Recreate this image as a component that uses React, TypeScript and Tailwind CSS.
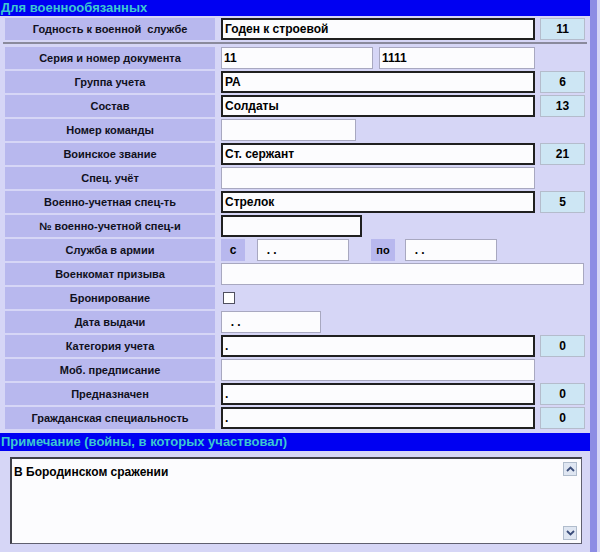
const font = { fontFamily: '"Liberation Sans", Arial, sans-serif' };

type Row = {
  label: string;
  kind: "field" | "pair" | "range" | "check";
  value?: string;
  value2?: string;
  width?: string;
  dark?: boolean;
  code?: string;
};

const rows: Row[] = [
  { label: "Серия и номер документа", kind: "pair", value: "11", value2: "1111" },
  { label: "Группа учета", kind: "field", value: "РА", dark: true, code: "6" },
  { label: "Состав", kind: "field", value: "Солдаты", dark: true, code: "13" },
  { label: "Номер команды", kind: "field", value: "", width: "w-[135px]" },
  { label: "Воинское звание", kind: "field", value: "Ст. сержант", dark: true, code: "21" },
  { label: "Спец. учёт", kind: "field", value: "" },
  { label: "Военно-учетная спец-ть", kind: "field", value: "Стрелок", dark: true, code: "5" },
  { label: "№ военно-учетной спец-и", kind: "field", value: "", width: "w-[141px]", dark: true },
  { label: "Служба в армии", kind: "range" },
  { label: "Военкомат призыва", kind: "field", value: "", width: "w-[363px]" },
  { label: "Бронирование", kind: "check" },
  { label: "Дата выдачи", kind: "field", value: "  . .", width: "w-[100px]" },
  { label: "Категория учета", kind: "field", value: ".", dark: true, code: "0" },
  { label: "Моб. предписание", kind: "field", value: "" },
  { label: "Предназначен", kind: "field", value: ".", dark: true, code: "0" },
  { label: "Гражданская специальность", kind: "field", value: ".", dark: true, code: "0" },
];

function Input({ value, width = "w-[314px]", dark }: { value: string; width?: string; dark?: boolean }) {
  return (
    <div
      className={`${width} h-[22px] bg-[#fcfcfe] flex items-center px-[2px] text-[12px] font-bold text-black whitespace-pre ${
        dark ? "border-2 border-[#202020]" : "border border-[#a8a8c0]"
      }`}
    >
      {value}
    </div>
  );
}

function Code({ value }: { value?: string }) {
  if (!value) return <div className="w-[45px] h-[22px]" />;
  return (
    <div className="w-[45px] h-[22px] bg-[#cde6f4] border border-[#b4bccc] flex items-center justify-center text-[12px] font-bold text-black">
      {value}
    </div>
  );
}

function Label({ text }: { text: string }) {
  return (
    <div className="w-[210px] h-[22px] bg-[#b8b8ee] flex items-center justify-center text-[11px] font-bold text-[#101020] whitespace-pre">
      {text}
    </div>
  );
}

function FormRow({ r }: { r: Row }) {
  return (
    <div className="flex items-start gap-[6px] h-[24px] pt-px">
      <Label text={r.label} />
      {r.kind === "field" && (
        <div className="flex gap-[5px]">
          <Input value={r.value ?? ""} width={r.width} dark={r.dark} />
          {r.code && <Code value={r.code} />}
        </div>
      )}
      {r.kind === "pair" && (
        <div className="flex gap-[6px]">
          <Input value={r.value ?? ""} width="w-[152px]" />
          <Input value={r.value2 ?? ""} width="w-[156px]" />
        </div>
      )}
      {r.kind === "range" && (
        <div className="flex items-start">
          <div className="w-[24px] h-[22px] bg-[#b8b8ee] flex items-center justify-center text-[12px] font-bold">с</div>
          <div className="ml-[12px]">
            <Input value="  . ." width="w-[92px]" />
          </div>
          <div className="ml-[22px] w-[24px] h-[22px] bg-[#b8b8ee] flex items-center justify-center text-[11px] font-bold">по</div>
          <div className="ml-[10px]">
            <Input value="  . ." width="w-[92px]" />
          </div>
        </div>
      )}
      {r.kind === "check" && (
        <div className="h-[22px] flex items-center pl-[2px]">
          <div className="w-[12px] h-[12px] bg-white border border-[#505060]" />
        </div>
      )}
    </div>
  );
}

function Chevron({ up }: { up?: boolean }) {
  return (
    <div className="w-[14px] h-[14px] bg-[#dfe6f2] border border-[#b0bccc] flex items-center justify-center">
      <svg width="9" height="6" viewBox="0 0 9 6">
        <path d={up ? "M1 5 L4.5 1.5 L8 5" : "M1 1 L4.5 4.5 L8 1"} stroke="#3a4c7a" strokeWidth="1.8" fill="none" />
      </svg>
    </div>
  );
}

export default function App() {
  return (
    <div className="w-[600px] h-[552px] bg-[#d6d6f6] flex overflow-hidden" style={font}>
      <div className="w-[590px] flex flex-col">
        <div className="h-[16px] bg-[#0000f2] text-[#3cc8d0] text-[13px] font-bold flex items-center px-[1px] w-[596px]">
          Для военнообязанных
        </div>

        <div className="pl-[5px] pt-[1px]">
          <FormRow r={{ label: "Годность к военной  службе", kind: "field", value: "Годен к строевой", dark: true, code: "11" }} />
        </div>
        <div className="h-[2px] mt-[1px] bg-[#8a8a9c] mx-[3px]" />
        <div className="pl-[5px] pt-[2px] flex flex-col">
          {rows.map((r) => (
            <FormRow key={r.label} r={r} />
          ))}
        </div>

        <div className="h-[18px] mt-[3px] bg-[#0000f2] text-[#3cc8d0] text-[13px] font-bold flex items-center px-[1px] w-[596px]">
          Примечание (войны, в которых участвовал)
        </div>
        <div className="pl-[10px] pt-[6px]">
          <div className="w-[572px] h-[87px] bg-[#fcfcfe] border-t-2 border-l-2 border-[#404048] border-r border-b border-r-[#606070] border-b-[#606070] flex">
            <div className="flex-1 px-[2px] pt-[4px] text-[12px] font-bold text-black">В Бородинском сражении</div>
            <div className="w-[16px] flex flex-col justify-between py-[3px] mr-[2px]">
              <Chevron up />
              <Chevron />
            </div>
          </div>
        </div>
      </div>
      <div className="w-[7px] bg-[#8c8ce4]" />
    </div>
  );
}
